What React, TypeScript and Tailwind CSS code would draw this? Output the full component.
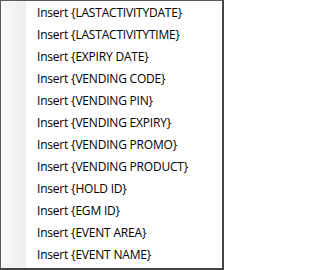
const items = [
  "LASTACTIVITYDATE",
  "LASTACTIVITYTIME",
  "EXPIRY DATE",
  "VENDING CODE",
  "VENDING PIN",
  "VENDING EXPIRY",
  "VENDING PROMO",
  "VENDING PRODUCT",
  "HOLD ID",
  "EGM ID",
  "EVENT AREA",
  "EVENT NAME",
];

export default function App() {
  return (
    <div className="w-[224px] h-[270px] bg-white border-l border-t border-[#5a5a5a] border-r-2 border-b-2 border-r-[#444] border-b-[#444] flex flex-col" style={{ fontFamily: '"Segoe UI", "Open Sans", sans-serif' }}>
      <div className="flex-1 flex relative pt-[1px]">
        <div className="absolute left-0 top-0 bottom-0 w-[25px] bg-gradient-to-r from-[#f8f8f8] to-[#efefef]" />
        <div className="relative flex flex-col w-full">
          {items.map((t) => (
            <div key={t} className="h-[22px] flex items-center pl-[36px] text-[12px] tracking-[-0.2px] text-black leading-none">
              Insert {"{"}{t}{"}"}
            </div>
          ))}
        </div>
      </div>
    </div>
  );
}
